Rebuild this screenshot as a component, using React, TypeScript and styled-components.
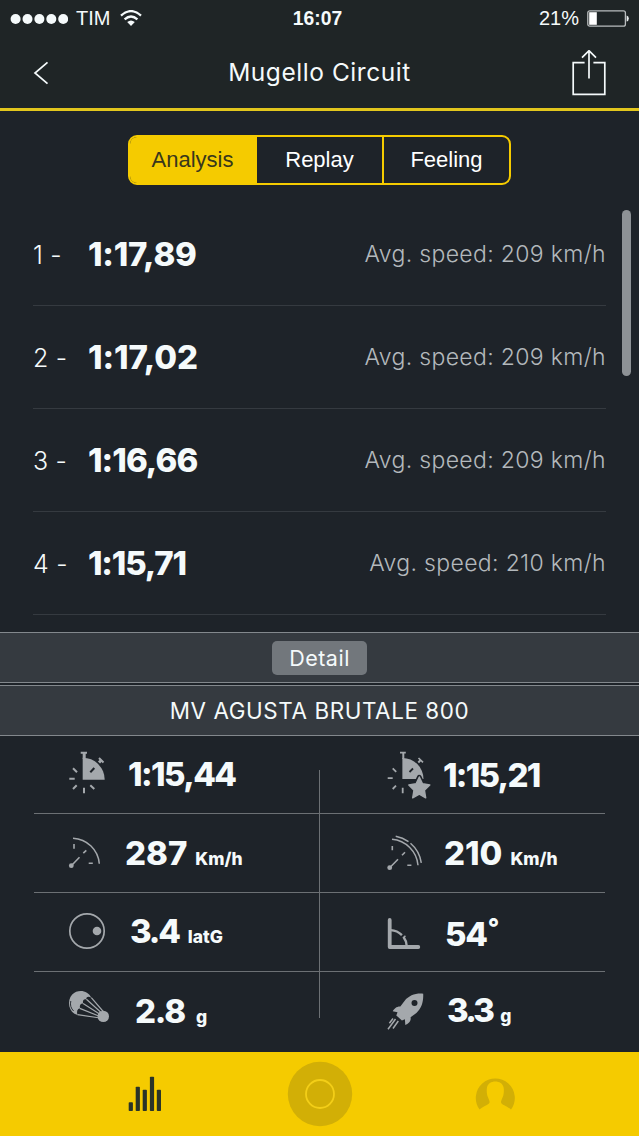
import React from "react";
import styled, { createGlobalStyle } from "styled-components";

const yellow = "#f5cb00";
const dark = "#1e2329";
const iconGrey = "#a4a8ac";

const GlobalStyle = createGlobalStyle`
  *, *::before, *::after { box-sizing: border-box; }
  body { margin: 0; background: ${dark}; }
`;

const Screen = styled.main`
  display: flex;
  flex-direction: column;
  width: 639px;
  height: 1136px;
  overflow: hidden;
  background: ${dark};
  color: #f5fafb;
  font-family: Inter, "Noto Sans", sans-serif;
`;

const Header = styled.header`
  height: 111px;
  flex: none;
  background: #1f2526;
  border-bottom: 3px solid #e2c61d;
`;

const StatusBar = styled.div`
  display: grid;
  grid-template-columns: 1fr auto 1fr;
  align-items: center;
  height: 37px;
  padding: 0 10px;
  font: 20px/37px "Liberation Sans", Arial, sans-serif;
`;

const StatusGroup = styled.div<{ $end?: boolean }>`
  display: flex;
  align-items: center;
  justify-content: ${(p) => (p.$end ? "flex-end" : "flex-start")};
  gap: 8px;
  svg { display: block; }
`;

const Wifi = styled.svg`
  margin-left: 2px;
`;

const Clock = styled.time`
  font-weight: 700;
  font-size: 19.3px;
  padding-right: 4px;
`;

const NavBar = styled.nav`
  display: grid;
  grid-template-columns: 60px 1fr 60px;
  align-items: center;
  height: 71px;
  padding: 0 20px;
`;

const IconButton = styled.button<{ $inset?: number }>`
  display: flex;
  justify-content: center;
  padding: 0 ${(p) => p.$inset ?? 0}px 0 0;
  border: 0;
  background: none;
  color: inherit;
`;

const Title = styled.h1`
  margin: 0;
  text-align: center;
  font-size: 24.5px;
  font-weight: 400;
  line-height: 71px;
  letter-spacing: 0.55px;
`;

const Segments = styled.div`
  display: grid;
  grid-template-columns: 125px 127px 1fr;
  flex: none;
  width: 383px;
  height: 50px;
  margin: 24px auto 18px;
  border: 2px solid ${yellow};
  border-radius: 9px;
  overflow: hidden;
`;

const Segment = styled.button<{ $active?: boolean }>`
  border: 0;
  border-left: ${(p) => (p.$active ? "0" : `2px solid ${yellow}`)};
  padding: 0;
  background: ${(p) => (p.$active ? yellow : "transparent")};
  color: ${(p) => (p.$active ? "#38371c" : "#fff")};
  font: 22px/44px "Liberation Sans", Arial, sans-serif;
`;

const LapList = styled.section`
  position: relative;
  height: 429px;
  flex: none;
  padding: 0 33px;
  overflow: hidden;
`;

const LapRow = styled.div`
  display: grid;
  grid-template-columns: 55px 1fr auto;
  align-items: center;
  height: 103px;
  padding-bottom: 1px;
  border-bottom: 1px solid #353a40;
  line-height: 42px;
`;

const LapNumber = styled.span`
  padding-top: 3px;
  font-size: 25px;
  font-weight: 300;
  letter-spacing: 0.2px;
`;

const LapTime = styled.strong<{ $spacing: number }>`
  font-size: 33px;
  font-weight: 800;
  letter-spacing: ${(p) => p.$spacing}px;
`;

const LapSpeed = styled.span`
  color: #b3b8bc;
  font-size: 23px;
  font-weight: 300;
  letter-spacing: 0.34px;
`;

const ScrollThumb = styled.i`
  position: absolute;
  top: 7px;
  right: 8px;
  width: 9px;
  height: 166px;
  border-radius: 5px;
  background: #8e9296;
`;

const Band = styled.div`
  display: flex;
  align-items: center;
  justify-content: center;
  flex: none;
  height: 51px;
  border: solid #83888d;
  border-width: 1px 0;
  background: #353a40;
  & + & { margin-top: 2px; }
`;

const DetailButton = styled.button`
  width: 95px;
  height: 34px;
  padding: 0;
  border: 0;
  border-radius: 5px;
  background: #72777c;
  color: #f5fafb;
  font: 400 21.5px/34px Inter, sans-serif;
  letter-spacing: 0.5px;
`;

const BikeName = styled.h2`
  margin: 0;
  font-size: 22.4px;
  font-weight: 400;
  line-height: 49px;
  letter-spacing: 0.6px;
`;

const Stats = styled.section`
  position: relative;
  display: grid;
  grid-template-columns: 286px 285px;
  grid-template-rows: 78px 79px 79px 80px;
  flex: none;
  padding-left: 34px;

  &::after {
    content: "";
    position: absolute;
    left: 319px;
    top: 34px;
    width: 1px;
    height: 248px;
    background: #6c7074;
  }
`;

const Stat = styled.div`
  display: flex;
  padding-left: 32px;
  border-bottom: 1px solid #6c7074;
  &:nth-child(even) { padding-left: 64px; }
  &:nth-last-child(-n + 2) { border-bottom: 0; }
  svg { flex: none; display: block; }
`;

const Reading = styled.div<{ $indent: number; $drop: number; $spacing: number }>`
  padding: ${(p) => p.$drop}px 0 0 ${(p) => p.$indent}px;
  font-size: 33px;
  font-weight: 800;
  line-height: 40px;
  letter-spacing: ${(p) => p.$spacing}px;
  white-space: nowrap;
`;

const Unit = styled.small<{ $gap?: number }>`
  margin-left: ${(p) => p.$gap ?? 8}px;
  font-size: 17.5px;
  font-weight: 800;
  letter-spacing: 0;
`;

const Degree = styled.sup`
  margin-left: 1px;
  font-size: 25px;
  line-height: 0;
  vertical-align: 10px;
`;

const TabBar = styled.nav`
  display: flex;
  justify-content: center;
  flex: 1;
  background: ${yellow};
`;

const Tab = styled.button`
  width: 175.5px;
  padding: 0;
  border: 0;
  background: none;
  svg { display: block; margin: 0 auto; }
`;

const StatSvg = ({ children }: { children: React.ReactNode }) => (
  <svg width="48" height="78" viewBox="0 0 48 78" fill="none" stroke={iconGrey} strokeWidth="1.8">
    {children}
  </svg>
);

const Stopwatch = () => (
  <StatSvg>
    <path d="M16.7 43.7V21.7A22 22 0 0 1 38.7 43.7Z" fill={iconGrey} stroke="none" />
    <path d="M18.2 23V16M33 26.5L35.5 24" strokeWidth="3" />
    <path d="M14.7 16.8H21M33 22L37.5 26.5" strokeWidth="2" />
    <path d="M24.3 36.3L28.3 32" stroke={dark} strokeWidth="2" />
    <path d="M3.3 42.7H8.7M7 32.3L11 36.3M7 53L10.7 49.3M18 51.7V57.3M24.3 49.3L28.3 53" strokeWidth="2" />
  </StatSvg>
);

const BestStopwatch = () => (
  <StatSvg>
    <path d="M18.4 43V22A21 21 0 0 1 39.5 43Z" fill={iconGrey} stroke="none" />
    <path d="M19.3 23V16M34.3 26.5L36.7 24" strokeWidth="2" />
    <path d="M16 16.7H21.8M34.5 22L39 26.3" strokeWidth="1.7" />
    <path d="M25.5 36L29 32.5" stroke={dark} />
    <path d="M3.7 42.2H8.7M8.7 32.3L12.2 35.9M8.7 53L12 49.7M18.7 51.7V57.3" />
    <path
      d="M35.3 41L38.5 47.8L45.8 49L40.4 54.2L41.7 61.8L35.3 58.2L28.7 61.8L30 54.2L24.8 49L32.1 47.8Z"
      fill={iconGrey}
      stroke={dark}
      strokeWidth="4.5"
      strokeLinejoin="round"
    />
    <path
      d="M35.3 41L38.5 47.8L45.8 49L40.4 54.2L41.7 61.8L35.3 58.2L28.7 61.8L30 54.2L24.8 49L32.1 47.8Z"
      fill={iconGrey}
      strokeWidth="1.4"
      strokeLinejoin="round"
    />
  </StatSvg>
);

const Gauge = () => (
  <StatSvg>
    <path d="M7 24.2A27.7 27.7 0 0 1 33.3 49.8" strokeWidth="1.5" />
    <path d="M5.3 51.7L13.5 43.3M17.3 39.2L20.3 36.3M8 30V34.7M22.7 49.3H26.8" strokeWidth="1.6" />
    <circle cx="5.3" cy="51.7" r="2.4" fill={iconGrey} stroke="none" />
  </StatSvg>
);

const TopGauge = () => (
  <StatSvg>
    <path d="M8 25.3A28.5 28.5 0 0 1 34 51.2M11.7 22.3A32 32 0 0 1 24.5 27.6M26.5 29.3A32 32 0 0 1 37.3 48.9" strokeWidth="1.5" />
    <path d="M5.7 53.7L14 45.3M18 41.3L21 38.3M8.3 32V36.3M23.3 51.2H27.4" strokeWidth="1.6" />
    <circle cx="5.7" cy="53.7" r="2.4" fill={iconGrey} stroke="none" />
  </StatSvg>
);

const LateralForce = () => (
  <StatSvg>
    <circle cx="21" cy="38" r="17.2" strokeWidth="1.7" />
    <circle cx="31" cy="38" r="4.3" fill={iconGrey} stroke="none" />
  </StatSvg>
);

const LeanAngle = () => (
  <StatSvg>
    <path d="M5.7 27V54H34.3" strokeWidth="3.8" strokeLinecap="round" strokeLinejoin="round" />
    <path d="M6.7 37.1A17 17 0 0 1 17.9 42.2M19.4 43.8A17 17 0 0 1 22.7 53" strokeWidth="2.4" />
    <path d="M19.6 44.8L21.4 42.8" strokeWidth="1.5" />
  </StatSvg>
);

const Parachute = () => (
  <StatSvg>
    <path
      d="M11.5 43C2.5 40.5 0.5 28.5 6.2 22.4C12 16.8 22 18.2 25.3 25.7Q20.8 23.2 20 27.2Q16.3 26.8 17 31.4Q13 31.4 14 36.2Q9.8 37.4 11.5 43Z"
      fill={iconGrey}
      stroke="none"
    />
    <path d="M4.8 29C3.8 33 5 36.5 7.6 39" stroke={dark} strokeWidth="0.9" />
    <path d="M25.3 25.7L38.5 41M20.4 27.2L36.8 42M17.1 31.4L35.5 43.2M13.8 36.4L34 44.5M11.5 42.6L34 46" strokeWidth="1.2" />
    <circle cx="37.3" cy="44.4" r="5.7" fill={iconGrey} stroke="none" />
  </StatSvg>
);

const Rocket = () => (
  <StatSvg>
    <path
      d="M39.2 21.7C31.4 21 25 23.5 20.5 28.9L16.3 34.4C12.3 34.3 10.3 36.6 8.7 39.2L13.5 40.3L12.3 43.4L17.9 48.4L20.9 47.2L21.3 53C24.4 51.6 27.3 49.4 26.6 45.2L32.4 41C37.4 36.6 39.6 30 39.2 21.7Z"
      fill={iconGrey}
      stroke="none"
    />
    <circle cx="30.5" cy="31" r="3" fill={dark} stroke="none" />
    <path d="M11.5 47L4 57.2M14.3 49L9 56.5M9 46.5L5.4 51.3" strokeWidth="1.5" />
  </StatSvg>
);

const laps = [
  { number: 1, time: "1:17,89", speed: 209, spacing: -0.25 },
  { number: 2, time: "1:17,02", speed: 209, spacing: -0.1 },
  { number: 3, time: "1:16,66", speed: 209, spacing: -0.95 },
  { number: 4, time: "1:15,71", speed: 210, spacing: -1.2 },
];

const stats = [
  { icon: <Stopwatch />, value: "1:15,44", indent: 14, drop: 18, spacing: -1.6 },
  { icon: <BestStopwatch />, value: "1:15,21", indent: 11, drop: 19, spacing: -1.75 },
  { icon: <Gauge />, value: "287", unit: "Km/h", indent: 11, drop: 19, spacing: 0 },
  { icon: <TopGauge />, value: "210", unit: "Km/h", indent: 12, drop: 19, spacing: 0 },
  { icon: <LateralForce />, value: "3.4", unit: "latG", gap: 9, indent: 16, drop: 18, spacing: -2.2 },
  { icon: <LeanAngle />, value: "54", degree: true, indent: 13, drop: 21, spacing: -1.2 },
  { icon: <Parachute />, value: "2.8", unit: "g", gap: 11, indent: 21, drop: 19, spacing: -1.2 },
  { icon: <Rocket />, value: "3.3", unit: "g", gap: 8, indent: 15, drop: 18, spacing: -2.8 },
];

export default function App() {
  return (
    <>
      <GlobalStyle />
      <Screen>
        <Header>
          <StatusBar>
            <StatusGroup>
              <svg width="58" height="12" viewBox="0 0 58 12" fill="#f5fafb">
                {[5.6, 17.5, 29.4, 41.3, 53.2].map((x) => (
                  <circle key={x} cx={x} cy="6" r="5" />
                ))}
              </svg>
              <span>TIM</span>
              <Wifi width="22" height="18" viewBox="0 0 22 18" fill="none" stroke="#f5fafb" strokeWidth="2.3">
                <path d="M1 5.6Q11 -3.4 21 5.6M4.6 9.4Q11 3.6 17.4 9.4" />
                <path d="M11 16L7.2 12Q11 8.9 14.8 12Z" fill="#f5fafb" stroke="none" />
              </Wifi>
            </StatusGroup>
            <Clock>16:07</Clock>
            <StatusGroup $end>
              <span>21%</span>
              <svg width="42" height="17" viewBox="0 0 42 17">
                <rect x="0.8" y="0.8" width="37.6" height="15.4" rx="2" fill="none" stroke="#b9bdbe" strokeWidth="1.3" />
                <rect x="2.2" y="2.2" width="7.6" height="12.6" fill="#fff" />
                <path d="M39.6 5.5Q41.8 6 41.8 8.5T39.6 11.5Z" fill="#e9eded" />
              </svg>
            </StatusGroup>
          </StatusBar>
          <NavBar>
            <IconButton aria-label="Back" $inset={18}>
              <svg width="16" height="24" viewBox="0 0 16 24" fill="none" stroke="#f5fafb" strokeWidth="1.7">
                <path d="M14.5 1.3L2 12L14.5 22.7" />
              </svg>
            </IconButton>
            <Title>Mugello Circuit</Title>
            <IconButton aria-label="Share">
              <svg width="34" height="46" viewBox="0 0 34 46" fill="none" stroke="#f5fafb" strokeWidth="1.7">
                <path d="M12.6 12.6H1.2V44.3H32.8V12.6H21.4M17 28.5V1M10 7.7L17 0.7L24 7.7" />
              </svg>
            </IconButton>
          </NavBar>
        </Header>

        <Segments>
          <Segment $active>Analysis</Segment>
          <Segment>Replay</Segment>
          <Segment>Feeling</Segment>
        </Segments>

        <LapList>
          {laps.map((lap) => (
            <LapRow key={lap.number}>
              <LapNumber>{lap.number} -</LapNumber>
              <LapTime $spacing={lap.spacing}>{lap.time}</LapTime>
              <LapSpeed>Avg. speed: {lap.speed} km/h</LapSpeed>
            </LapRow>
          ))}
          <ScrollThumb />
        </LapList>

        <Band>
          <DetailButton>Detail</DetailButton>
        </Band>
        <Band>
          <BikeName>MV AGUSTA BRUTALE 800</BikeName>
        </Band>

        <Stats>
          {stats.map((s, i) => (
            <Stat key={i}>
              {s.icon}
              <Reading $indent={s.indent} $drop={s.drop} $spacing={s.spacing}>
                {s.value}
                {s.degree && <Degree>°</Degree>}
                {s.unit && <Unit $gap={s.gap}>{s.unit}</Unit>}
              </Reading>
            </Stat>
          ))}
        </Stats>

        <TabBar>
          <Tab aria-label="Analysis">
            <svg width="34" height="36" viewBox="0 0 34 36" fill="#2a3428">
              <rect x="1.7" y="26.2" width="4.2" height="8.8" rx="0.8" />
              <rect x="8.7" y="10.7" width="4.2" height="24.3" rx="0.8" />
              <rect x="15.7" y="13.7" width="4.2" height="21.3" rx="0.8" />
              <rect x="22.9" y="0.7" width="4.2" height="34.3" rx="0.8" />
              <rect x="29.8" y="13.7" width="4.2" height="21.3" rx="0.8" />
            </svg>
          </Tab>
          <Tab aria-label="Record">
            <svg width="66" height="66" viewBox="0 0 66 66">
              <circle cx="33" cy="33" r="32.2" fill="#d2af06" />
              <circle cx="33" cy="33" r="14" fill="none" stroke="#f3ce18" strokeWidth="1.8" />
            </svg>
          </Tab>
          <Tab aria-label="Profile">
            <svg width="40" height="38" viewBox="0 0 40 38" fill="#d2af06">
              <path d="M4.6 34.6A19.5 19.5 0 1 1 36 34.6C32 30.8 26.6 30.2 26 27.3C25.8 25.6 27.6 23.2 28.3 20.5C29 17.5 29 15 28.6 12.6C27.8 8.6 24.3 6.6 20.3 6.6S12.8 8.6 12 12.6C11.6 15 11.6 17.5 12.3 20.5C13 23.2 14.8 25.6 14.6 27.3C14 30.2 8.6 30.8 4.6 34.6Z" />
            </svg>
          </Tab>
        </TabBar>
      </Screen>
    </>
  );
}
